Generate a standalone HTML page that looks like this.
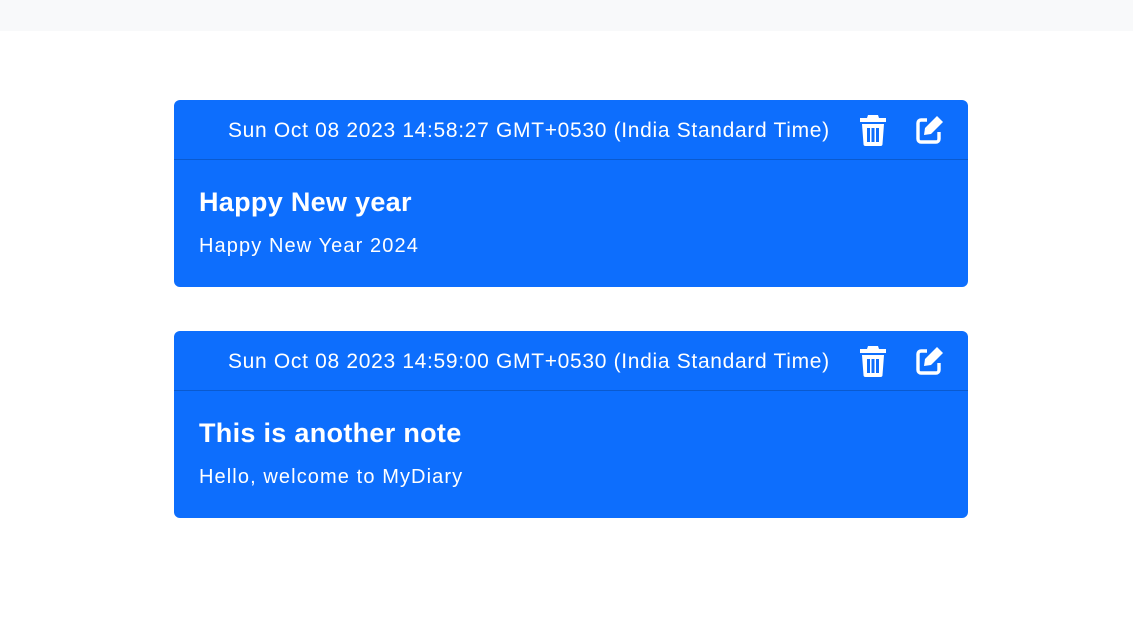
<!DOCTYPE html><html><head><style>
body{margin:0;background:#fff;font-family:"Liberation Sans",sans-serif;width:1133px;height:637px;overflow:hidden}
.nav{height:31px;background:#f8f9fa}
.card{position:absolute;left:174px;width:794px;background:#0d6efd;border-radius:6px;color:#fff}
.hd{height:59px;border-bottom:1px solid rgba(0,0,0,.18);position:relative}
.dt{position:absolute;left:54px;top:19px;font-size:21px;white-space:nowrap;letter-spacing:0.68px}
.ic{position:absolute;top:14px}
.bd{padding:27px 25px 0 25px;height:100px}
.t{font-size:27px;font-weight:bold;margin:0 0 17px;letter-spacing:0.3px}
.p{font-size:20px;margin:0;letter-spacing:1.1px}
</style></head><body>
<div class="nav"></div>
<div class="card" style="top:100px">
<div class="hd"><div class="dt">Sun Oct 08 2023 14:58:27 GMT+0530 (India Standard Time)</div>
<svg class="ic" style="left:685px" width="28" height="32" viewBox="0 0 28 32"><path fill="#fff" d="M9 1h10l1 3h7v4H1V4h7z"/><path fill="#fff" fill-rule="evenodd" d="M3 10h22l-1.5 20a2 2 0 0 1-2 2h-15a2 2 0 0 1-2-2zM8 14h3v14H8zM12.5 14h3v14h-3zM17 14h3v14h-3z"/></svg>
<svg class="ic" style="left:741px;top:15px" width="29" height="30" viewBox="0 0 29 30"><path fill="none" stroke="#fff" stroke-width="3.4" stroke-linejoin="round" d="M12 5H6a3 3 0 0 0-3 3v16a3 3 0 0 0 3 3h15a3 3 0 0 0 3-3v-7"/><path fill="#fff" d="M22 1l6 6-12 12-7 1 1-7z"/></svg>
</div>
<div class="bd"><p class="t">Happy New year</p><p class="p">Happy New Year 2024</p></div></div>
<div class="card" style="top:331px">
<div class="hd"><div class="dt">Sun Oct 08 2023 14:59:00 GMT+0530 (India Standard Time)</div>
<svg class="ic" style="left:685px" width="28" height="32" viewBox="0 0 28 32"><path fill="#fff" d="M9 1h10l1 3h7v4H1V4h7z"/><path fill="#fff" fill-rule="evenodd" d="M3 10h22l-1.5 20a2 2 0 0 1-2 2h-15a2 2 0 0 1-2-2zM8 14h3v14H8zM12.5 14h3v14h-3zM17 14h3v14h-3z"/></svg>
<svg class="ic" style="left:741px;top:15px" width="29" height="30" viewBox="0 0 29 30"><path fill="none" stroke="#fff" stroke-width="3.4" stroke-linejoin="round" d="M12 5H6a3 3 0 0 0-3 3v16a3 3 0 0 0 3 3h15a3 3 0 0 0 3-3v-7"/><path fill="#fff" d="M22 1l6 6-12 12-7 1 1-7z"/></svg>
</div>
<div class="bd"><p class="t">This is another note</p><p class="p">Hello, welcome to MyDiary</p></div></div>
</body></html>
